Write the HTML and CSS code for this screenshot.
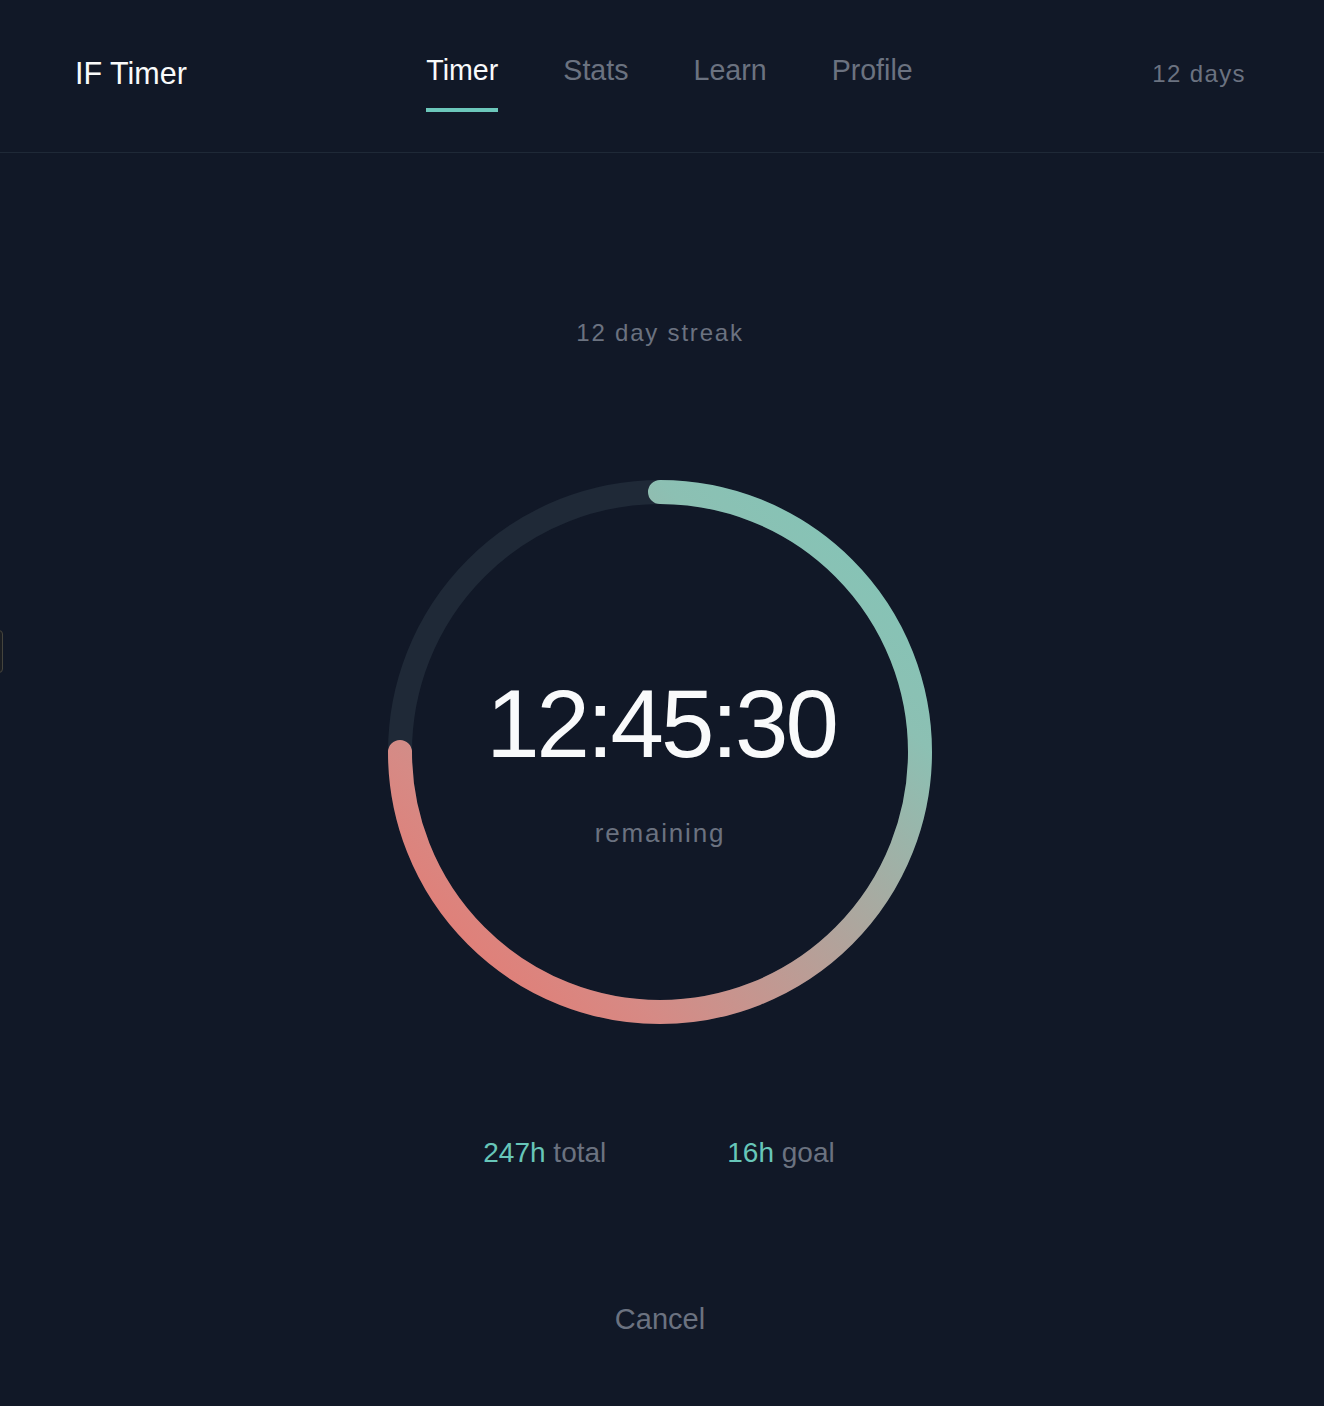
FILE: index.html
```html
<!DOCTYPE html>
<html lang="en">
<head>
<meta charset="utf-8">
<title>IF Timer</title>
<link rel="stylesheet" href="styles.css">
</head>
<body>
<div class="edge-handle"></div>
<header class="topbar">
  <div class="logo">IF Timer</div>
  <nav class="tabs">
    <a class="tab active">Timer</a>
    <a class="tab">Stats</a>
    <a class="tab">Learn</a>
    <a class="tab">Profile</a>
  </nav>
  <div class="streak-badge">12 days</div>
</header>
<main class="main">
  <div class="streak">12 day streak</div>
  <div class="ring">
    <svg class="ring-svg" width="544" height="544" viewBox="0 0 544 544">
      <defs>
        <linearGradient id="arc" gradientUnits="userSpaceOnUse" x1="544" y1="0" x2="0" y2="544">
          <stop offset="0" stop-color="#7fc7b9"/>
          <stop offset="0.25" stop-color="#8cc0b3"/>
          <stop offset="0.5" stop-color="#b0a49c"/>
          <stop offset="0.75" stop-color="#d68a85"/>
          <stop offset="0.92" stop-color="#e57a72"/>
          <stop offset="1" stop-color="#e8766f"/>
        </linearGradient>
      </defs>
      <circle cx="272" cy="272" r="260" fill="none" stroke="#1f2937" stroke-width="24"/>
      <path d="M272 12 A260 260 0 1 1 12 272" fill="none" stroke="url(#arc)" stroke-width="24" stroke-linecap="round"/>
    </svg>
    <div class="ring-center">
      <div class="time">12:45:30</div>
      <div class="remaining">remaining</div>
    </div>
  </div>
  <div class="stats">
    <div class="stat"><span class="num">247h</span> total</div>
    <div class="stat"><span class="num">16h</span> goal</div>
  </div>
  <button class="cancel">Cancel</button>
</main>
</body>
</html>
```
FILE: styles.css
```css
* { box-sizing: border-box; }
html, body {
  margin: 0;
  padding: 0;
  background: #111827;
  height: 100%;
  overflow: hidden;
}
body {
  font-family: "Liberation Sans", Arial, Helvetica, sans-serif;
  color: #f9fafb;
  position: relative;
}
.edge-handle {
  position: absolute;
  left: -10px;
  top: 630px;
  width: 13px;
  height: 43px;
  border: 1px solid #45443d;
  border-radius: 4px;
  background: #1a1d22;
}
.topbar {
  height: 153px;
  border-bottom: 1px solid #1f2937;
  display: flex;
  justify-content: space-between;
  align-items: flex-start;
  padding: 54px 78px 0 75px;
}
.logo {
  font-size: 30.5px;
  line-height: 36px;
  color: #f9fafb;
  margin-top: 1px;
}
.tabs {
  display: flex;
  gap: 65px;
}
.tab {
  font-size: 28.6px;
  line-height: 32px;
  color: #6b7280;
  padding-bottom: 22px;
  border-bottom: 4px solid transparent;
}
.tab.active {
  color: #f9fafb;
  border-bottom-color: #6cc7bb;
}
.streak-badge {
  font-size: 24px;
  line-height: 28px;
  letter-spacing: 1.4px;
  color: #6b7280;
  margin-top: 6px;
}
.main {
  display: flex;
  flex-direction: column;
  align-items: center;
  padding-top: 166px;
  padding-right: 4px;
}
.streak {
  font-size: 24px;
  line-height: 28px;
  letter-spacing: 1.8px;
  color: #6b7280;
}
.ring {
  margin-top: 133px;
  display: grid;
  width: 544px;
  height: 544px;
}
.ring-svg, .ring-center {
  grid-area: 1 / 1;
}
.ring-svg { display: block; }
.ring-center {
  align-self: start;
  margin-top: 196px;
  display: flex;
  flex-direction: column;
  align-items: center;
}
.time {
  font-size: 96px;
  line-height: 96px;
  letter-spacing: -3px;
  color: #f9fafb;
  margin-left: 2px;
}
.remaining {
  margin-top: 46px;
  font-size: 26px;
  line-height: 30px;
  letter-spacing: 1.8px;
  color: #6b7280;
}
.stats {
  margin-top: 113px;
  display: flex;
  gap: 121px;
  margin-right: 2px;
}
.stat {
  font-size: 28px;
  line-height: 32px;
  color: #6b7280;
}
.num { color: #67c6b9; }
.cancel {
  margin-top: 134px;
  background: none;
  border: 0;
  padding: 0;
  font-family: inherit;
  font-size: 29px;
  line-height: 32px;
  color: #6b7280;
  cursor: pointer;
}
```
